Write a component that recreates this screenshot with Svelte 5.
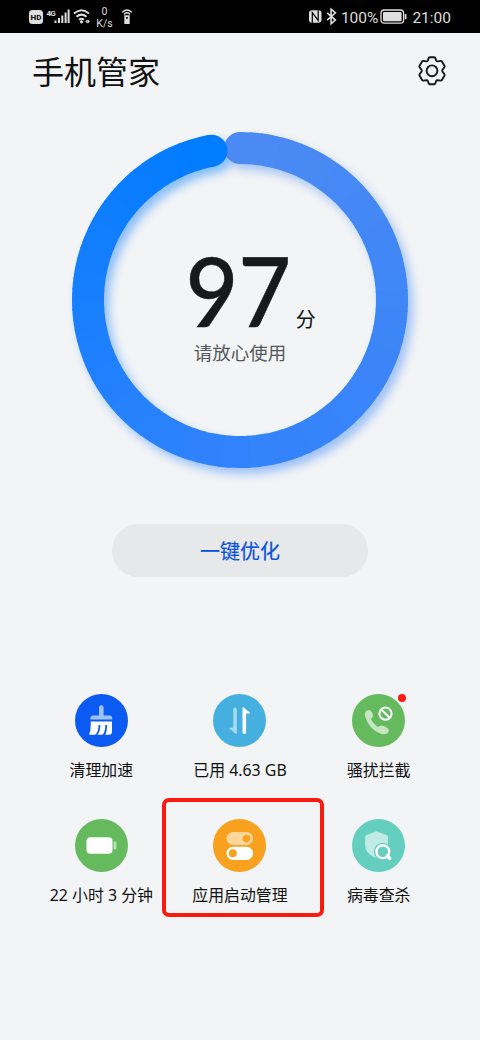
<script lang="ts">
  const score = 97;
  const radius = 152;
  const segmentCount = 97;

  const startColor = [76, 138, 243];
  const middleColor = [48, 130, 252];
  const endColor = [0, 124, 255];

  const pointAt = (angle: number) => {
    const rad = ((angle - 90) * Math.PI) / 180;
    return { x: 190 + radius * Math.cos(rad), y: 190 + radius * Math.sin(rad) };
  };

  const colorAt = (t: number) => {
    const [from, to, local] =
      t < 0.55
        ? [startColor, middleColor, t / 0.55]
        : [middleColor, endColor, (t - 0.55) / 0.45];
    const mixed = from.map((c, i) => Math.round(c + (to[i] - c) * local));
    return `rgb(${mixed.join(",")})`;
  };

  const sweep = (score / 100) * 360;
  const segments = Array.from({ length: segmentCount }, (_, i) => {
    const a = pointAt((i * sweep) / segmentCount);
    const b = pointAt(Math.min(sweep, ((i + 1) * sweep) / segmentCount + 0.5));
    return {
      d: `M${a.x} ${a.y}A${radius} ${radius} 0 0 1 ${b.x} ${b.y}`,
      color: colorAt(i / (segmentCount - 1)),
    };
  });
  const start = pointAt(0);
  const end = pointAt(sweep);

  const tools = [
    { icon: "clean", label: "清理加速", color: "#0b5bf3" },
    { icon: "data", label: "已用 4.63 GB", color: "#45b0e0" },
    { icon: "block", label: "骚扰拦截", color: "#65ba5e", dot: true },
    { icon: "battery", label: "22 小时 3 分钟", color: "#65ba5e" },
    { icon: "launch", label: "应用启动管理", color: "#f8a11f", marked: true },
    { icon: "virus", label: "病毒查杀", color: "#64cfbf" },
  ];
</script>

<div class="phone">
  <div class="status-bar">
    <div class="status-left">
      <svg width="108" height="33" viewBox="0 0 108 33">
        <rect x="1" y="10" width="14" height="14" rx="3.5" fill="#dedede" />
        <text x="8" y="20.2" class="hd">HD</text>
        <text x="18.5" y="15.9" class="network">4G</text>
        <g fill="#dedede">
          <rect x="26.5" y="20.5" width="2" height="2.5" />
          <rect x="30" y="18" width="2" height="5" />
          <rect x="33.3" y="15.5" width="2" height="7.5" />
          <rect x="36.6" y="12.5" width="2" height="10.5" />
          <rect x="39.6" y="9.5" width="2" height="13.5" />
        </g>
        <g fill="none" stroke="#dedede" stroke-width="2">
          <path d="M46 13.5Q53.5 7 61 13.5" />
          <path d="M48.5 16.8Q53.5 12.5 58.5 16.8" />
          <path d="M51 19.8Q53.5 17.8 56 19.8" stroke-width="1.8" />
        </g>
        <circle cx="53.5" cy="21.8" r="1.6" fill="#dedede" />
        <path d="M57.3 21.5l2.2-2v4zM62 21.5l-2.2-2v4z" fill="#dedede" />
        <text x="76.5" y="15.2" class="speed">0</text>
        <text x="76.5" y="27" class="speed">K/s</text>
        <g fill="none" stroke="#dedede" stroke-width="1.4" stroke-linecap="round">
          <path d="M94.6 12.1Q99 7.7 103.4 12.1" />
          <path d="M96.4 14Q99 11.6 101.6 14" />
        </g>
        <path d="M96.3 15.3h5.4v8.7h-5.4zM98.2 17v1.8h1.6V17z" fill="#dedede" fill-rule="evenodd" />
      </svg>
    </div>
    <div class="status-right">
      <svg width="30" height="33" viewBox="0 0 30 33">
        <rect x="1" y="10.3" width="12.5" height="12.5" rx="3" fill="#dedede" />
        <path d="M4.3 22.8V12.6L10.2 20.5V10.3" fill="none" stroke="#000" stroke-width="1.2" />
        <path d="M19.2 12.8l8.2 7.3-4.3 3.6V9.2l4.3 3.6-8.2 7.3" fill="none" stroke="#dedede" stroke-width="1.6" />
      </svg>
      <span class="percent">100%</span>
      <svg class="battery" width="28" height="33" viewBox="0 0 28 33">
        <rect x="1" y="10" width="22.6" height="13.2" rx="3.2" fill="none" stroke="#dedede" stroke-width="1.3" />
        <rect x="3" y="12" width="18.6" height="9.2" rx="1.2" fill="#dedede" />
        <path d="M25.6 14v5.2" stroke="#dedede" stroke-width="1.7" />
      </svg>
      <span class="time">21:00</span>
    </div>
  </div>

  <header class="header">
    <h1>手机管家</h1>
    <button class="settings" aria-label="设置">
      <svg width="30" height="30" viewBox="0 0 30 30" fill="none" stroke="#17181a" stroke-width="1.9" stroke-linejoin="round">
        <path d="M11.8 1.9Q12.2 1.3 13 1.3H17Q17.8 1.3 18.2 1.9L19.2 4.6Q19.6 5.5 20.6 5.4L23.7 4.9Q24.5 4.8 24.9 5.4L27.5 9.8Q27.9 10.5 27.4 11.2L25.5 13.8Q24.9 14.7 25.5 15.6L27.4 18.2Q27.9 18.9 27.5 19.6L24.9 24Q24.5 24.7 23.7 24.6L20.6 24.2Q19.6 24.1 19.2 25L18.2 27.6Q17.8 28.3 17 28.3H13Q12.2 28.3 11.8 27.6L10.8 25Q10.4 24.1 9.4 24.2L6.3 24.6Q5.5 24.7 5.1 24L2.5 19.6Q2.1 18.9 2.6 18.2L4.5 15.6Q5.1 14.7 4.5 13.8L2.6 11.2Q2.1 10.5 2.5 9.8L5.1 5.4Q5.5 4.8 6.3 4.9L9.4 5.4Q10.4 5.5 10.8 4.6Z" />
        <circle cx="15" cy="14.8" r="5.4" />
      </svg>
    </button>
  </header>

  <section class="score-ring">
    <svg class="ring" width="380" height="380" viewBox="0 0 380 380">
      <defs>
        <filter id="glow" x="-10%" y="-10%" width="120%" height="120%">
          <feGaussianBlur stdDeviation="5" />
        </filter>
        <g id="arc">
          <circle cx={start.x} cy={start.y} r="16" fill={colorAt(0)} />
          {#each segments as segment}
            <path d={segment.d} stroke={segment.color} stroke-width="32" fill="none" />
          {/each}
          <circle cx={end.x} cy={end.y} r="16" fill={colorAt(1)} />
        </g>
      </defs>
      <use href="#arc" x="5" y="6" opacity=".45" filter="url(#glow)" />
      <use href="#arc" />
    </svg>
    <div class="score">
      <div class="score-line">
        <span class="score-value">{score}</span>
        <span class="score-unit">分</span>
      </div>
      <div class="score-hint">请放心使用</div>
    </div>
  </section>

  <button class="optimize">一键优化</button>

  <section class="tools">
    {#each tools as tool}
      <div class="tool">
        <div class="tool-icon" style="background: {tool.color}">
          <svg width="53" height="53" viewBox="0 0 53 53">
            {#if tool.icon === "clean"}
              <path d="M24 21.5V13.5a2.3 2.3 0 0 1 4.6 0v8h6q2.6 0 2.6 2.6v1.4H15.4v-1.4q0-2.6 2.6-2.6z" fill="#9dc3fb" />
              <path d="M15.8 27.5H37V37.5Q37 40.7 33.8 40.7H30.2Q32 38.5 32 31H30.3Q30.3 38.5 27.5 40.7H22.3Q25.3 38 25.3 31H23.6Q23.4 38.5 20.3 40.7H14.9Q13.8 40.7 14.3 39.6Q15.8 37.5 15.8 27.5Z" fill="#fff" />
            {:else if tool.icon === "data"}
              <path d="M23.8 15.2V39.3q0 1-.9.6l-6.3-5.2q-.7-.9.3-.9h3.4V15.2q0-1.7 1.7-1.7t1.8 1.7z" fill="#a5dbf3" />
              <path d="M29.5 38.3V13.8q0-1 .9-.5l6.4 5.1q.7.9-.3 1h-3.4V38.3q0 1.7-1.8 1.7t-1.8-1.7z" fill="#fff" />
            {:else if tool.icon === "block"}
              <path d="M14 17.3q2.4-2.1 4.4-.9 2.3 1.8 2.6 5.3 0 1.9-2.2 3 2.2 5 7.4 8.4 1.6-1.8 3.4-1.5 3.7.5 6.6 3.2 1.6 1.8-.2 4-2.5 2.1-6.4 1.3Q16.8 35.6 13 21.9q-.8-3 1-4.6z" fill="#c5e6c0" />
              <circle cx="33.5" cy="19.7" r="6.1" fill="#65ba5e" stroke="#fff" stroke-width="2" />
              <path d="M29.4 15.6l8.2 8.2" stroke="#fff" stroke-width="2" />
            {:else if tool.icon === "battery"}
              <rect x="11.5" y="18.3" width="26" height="16.5" rx="3.8" fill="#fff" />
              <rect x="38.6" y="22.6" width="2.8" height="7.8" rx=".8" fill="#bce1b9" />
            {:else if tool.icon === "launch"}
              <path d="M20 13h13.5a6.5 6.5 0 0 1 0 13H20a6.5 6.5 0 0 1 0-13z" fill="#fcd69b" />
              <circle cx="33.5" cy="19.6" r="3.8" fill="#f8a11f" />
              <path d="M20 27.7h13.5a6.6 6.6 0 0 1 0 13.2H20a6.6 6.6 0 0 1 0-13.2z" fill="#fff" />
              <circle cx="19.8" cy="34.2" r="4" fill="#f8a11f" />
            {:else}
              <path d="M24.4 12.3L35 16.3q.9.4.9 1.4V27q-.5 8-11.4 12-10.9-4-11.3-12v-9.3q0-1 .9-1.4z" fill="#c1ebe5" />
              <circle cx="30.8" cy="32.7" r="9" fill="#64cfbf" />
              <circle cx="30.8" cy="32.7" r="6.4" fill="none" stroke="#fff" stroke-width="2.4" />
              <path d="M35.3 37l2.3 2.2" stroke="#fff" stroke-width="3.6" stroke-linecap="round" />
            {/if}
          </svg>
          {#if tool.dot}
            <span class="dot"></span>
          {/if}
        </div>
        <span class="tool-label">{tool.label}</span>
        {#if tool.marked}
          <span class="marker"></span>
        {/if}
      </div>
    {/each}
  </section>
</div>

<style>
  :global(body) {
    margin: 0;
    background: #f2f4f6;
  }
  .phone {
    display: flex;
    flex-direction: column;
    width: 480px;
    height: 1040px;
    overflow: hidden;
    color: #111;
    background: #f2f4f6;
    font-family: "Noto Sans", "Noto Sans CJK SC", sans-serif;
  }
  button {
    padding: 0;
    border: none;
    background: none;
    font-family: inherit;
  }
  svg {
    display: block;
  }
  .status-bar {
    display: flex;
    justify-content: space-between;
    height: 33px;
    padding: 0 29px 0 28px;
    color: #dedede;
    background: #000;
    font-family: Roboto, sans-serif;
  }
  .status-right {
    display: flex;
    align-items: center;
    font-size: 15.5px;
  }
  .percent {
    margin-left: 3px;
    padding-top: 2px;
  }
  .battery {
    margin-left: 2px;
  }
  .time {
    margin-left: 4px;
    padding-top: 2px;
  }
  .hd {
    fill: #000;
    font: bold 8px Roboto, sans-serif;
    text-anchor: middle;
  }
  .network {
    fill: #dedede;
    font: bold 8px Roboto, sans-serif;
    letter-spacing: -0.8px;
  }
  .speed {
    fill: #dedede;
    font: 10.5px Roboto, sans-serif;
    text-anchor: middle;
  }
  .header {
    display: flex;
    align-items: flex-start;
    justify-content: space-between;
    height: 57px;
    padding: 20px 33px 0 32px;
  }
  .settings {
    margin-top: 3px;
  }
  h1 {
    margin: 0;
    font-size: 32px;
    font-weight: 400;
    line-height: 38px;
  }
  .score-ring {
    display: grid;
    justify-content: center;
    height: 380px;
  }
  .ring,
  .score {
    grid-area: 1 / 1;
  }
  .score {
    display: flex;
    flex-direction: column;
    align-items: center;
    padding-top: 132px;
  }
  .score-line {
    display: flex;
    align-items: baseline;
    height: 97px;
    padding-left: 18px;
  }
  .score-value {
    color: #17191b;
    font-family: Lato, sans-serif;
    font-size: 97px;
    font-weight: 500;
    line-height: 96px;
    transform: scaleX(0.94);
    -webkit-text-stroke: 0.4px #17191b;
  }
  .score-unit {
    margin-left: 1px;
    font-size: 20px;
  }
  .score-hint {
    color: #55585a;
    font-size: 18.5px;
    line-height: 28px;
  }
  .optimize {
    align-self: center;
    width: 256px;
    height: 53px;
    margin-top: 34px;
    border-radius: 27px;
    color: #0a52dd;
    background: #e6e8ea;
    font-size: 20px;
    -webkit-text-stroke: 0.2px #0a52dd;
  }
  .tools {
    display: grid;
    grid-template-columns: repeat(3, 1fr);
    grid-auto-rows: 125px;
    margin: 117px 32px 0;
  }
  .tool {
    position: relative;
    display: flex;
    flex-direction: column;
    align-items: center;
  }
  .tool-icon {
    position: relative;
    width: 53px;
    height: 53px;
    border-radius: 50%;
  }
  .tool-label {
    margin-top: 11px;
    font-size: 15.9px;
    line-height: 24px;
    white-space: nowrap;
  }
  .dot {
    position: absolute;
    top: -0.5px;
    right: -0.5px;
    width: 8px;
    height: 8px;
    border-radius: 50%;
    background: #fb1b12;
  }
  .marker {
    position: absolute;
    top: -21px;
    left: -9px;
    box-sizing: border-box;
    width: 162px;
    height: 119px;
    border: 4px solid #fb1a10;
    border-radius: 7px;
  }
</style>
